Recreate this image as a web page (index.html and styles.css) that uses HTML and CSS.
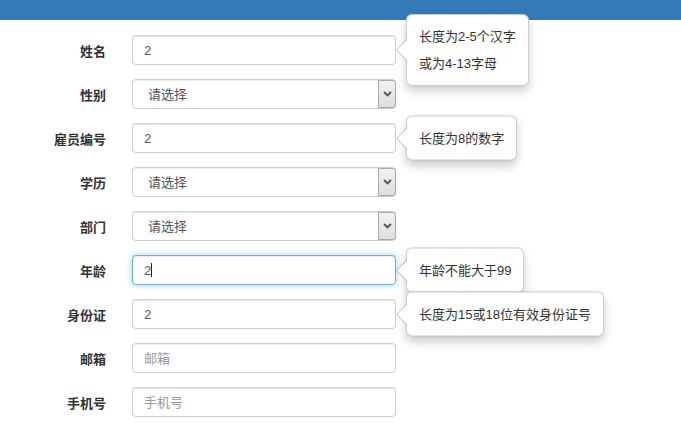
FILE: index.html
```html
<!DOCTYPE html>
<html lang="zh-CN">
<head>
<meta charset="utf-8">
<title>员工信息</title>
<link rel="stylesheet" href="styles.css">
</head>
<body>
<header class="topbar"></header>
<form class="form">
  <div class="row">
    <label class="label">姓名</label>
    <div class="field">
      <input class="control" type="text" value="2">
      <div class="popover"><span class="arrow"></span><p>长度为2-5个汉字</p><p>或为4-13字母</p></div>
    </div>
  </div>
  <div class="row">
    <label class="label">性别</label>
    <div class="field">
      <select class="control select"><option>请选择</option></select>
      <span class="select-btn"><svg width="9" height="6" viewBox="0 0 9 6"><path d="M1 1 L4.5 4.5 L8 1" fill="none" stroke="#555" stroke-width="1.8"/></svg></span>
    </div>
  </div>
  <div class="row">
    <label class="label">雇员编号</label>
    <div class="field">
      <input class="control" type="text" value="2">
      <div class="popover"><span class="arrow"></span><p>长度为8的数字</p></div>
    </div>
  </div>
  <div class="row">
    <label class="label">学历</label>
    <div class="field">
      <select class="control select"><option>请选择</option></select>
      <span class="select-btn"><svg width="9" height="6" viewBox="0 0 9 6"><path d="M1 1 L4.5 4.5 L8 1" fill="none" stroke="#555" stroke-width="1.8"/></svg></span>
    </div>
  </div>
  <div class="row">
    <label class="label">部门</label>
    <div class="field">
      <select class="control select"><option>请选择</option></select>
      <span class="select-btn"><svg width="9" height="6" viewBox="0 0 9 6"><path d="M1 1 L4.5 4.5 L8 1" fill="none" stroke="#555" stroke-width="1.8"/></svg></span>
    </div>
  </div>
  <div class="row">
    <label class="label">年龄</label>
    <div class="field">
      <input class="control focused" type="text" value="2">
      <span class="caret"></span>
      <div class="popover"><span class="arrow"></span><p>年龄不能大于99</p></div>
    </div>
  </div>
  <div class="row">
    <label class="label">身份证</label>
    <div class="field">
      <input class="control" type="text" value="2">
      <div class="popover"><span class="arrow"></span><p>长度为15或18位有效身份证号</p></div>
    </div>
  </div>
  <div class="row">
    <label class="label">邮箱</label>
    <div class="field">
      <input class="control" type="text" placeholder="邮箱">
    </div>
  </div>
  <div class="row">
    <label class="label">手机号</label>
    <div class="field">
      <input class="control" type="text" placeholder="手机号">
    </div>
  </div>
</form>
</body>
</html>
```
FILE: styles.css
```css
* { box-sizing: border-box; }
html, body { margin: 0; padding: 0; background: #fff; }
body {
  font-family: "Liberation Sans", "Noto Sans CJK SC", sans-serif;
  font-size: 13px;
  color: #333;
}
.topbar {
  height: 20px;
  background: #337ab7;
}
.form {
  display: flex;
  flex-direction: column;
  gap: 14px;
  margin-top: 15px;
}
.row {
  display: grid;
  grid-template-columns: 106px 264px;
  column-gap: 26px;
  align-items: center;
}
.label {
  text-align: right;
  font-weight: bold;
  font-size: 13px;
  color: #333;
}
.field {
  position: relative;
  height: 30px;
}
.control {
  display: block;
  width: 100%;
  height: 30px;
  margin: 0;
  padding: 0 11px;
  border: 1px solid #ccc;
  border-radius: 4px;
  background: #fff;
  font-family: "Liberation Sans", "Noto Sans CJK SC", sans-serif;
  font-size: 13px;
  color: #555;
  outline: none;
  box-shadow: inset 0 1px 1px rgba(0,0,0,.075);
}
.control::placeholder { color: #999; }
.select {
  appearance: none;
  -webkit-appearance: none;
  padding-left: 15px;
}
.select-btn {
  position: absolute;
  top: 1px;
  right: 0;
  bottom: 1px;
  width: 18px;
  border: 1px solid #a9a9a9;
  border-radius: 0 3px 3px 0;
  background: linear-gradient(#f2f2f2, #dedede);
  display: flex;
  align-items: center;
  justify-content: center;
  pointer-events: none;
}
.focused {
  border-color: #66afe9;
  box-shadow: inset 0 1px 1px rgba(0,0,0,.075), 0 0 6px rgba(102,175,233,.6);
}
.caret {
  position: absolute;
  left: 19px;
  top: 8px;
  width: 1px;
  height: 14px;
  background: #222;
}
.popover {
  position: absolute;
  left: calc(100% + 10px);
  top: 50%;
  transform: translateY(-50%);
  z-index: 10;
  white-space: nowrap;
  padding: 12px 12px;
  background: #fff;
  border: 1px solid rgba(0,0,0,.2);
  border-radius: 6px;
  box-shadow: 0 5px 10px rgba(0,0,0,.2);
  font-size: 13px;
  line-height: 19px;
  color: #333;
  display: flex;
  flex-direction: column;
  gap: 8px;
}
.popover p { margin: 0; }
.arrow {
  position: absolute;
  left: -11px;
  top: 50%;
  margin-top: -11px;
  width: 0;
  height: 0;
  border-style: solid;
  border-width: 11px 11px 11px 0;
  border-color: transparent rgba(0,0,0,.25) transparent transparent;
}
.arrow::after {
  content: "";
  position: absolute;
  left: 1px;
  top: -10px;
  width: 0;
  height: 0;
  border-style: solid;
  border-width: 10px 10px 10px 0;
  border-color: transparent #fff transparent transparent;
}
```
